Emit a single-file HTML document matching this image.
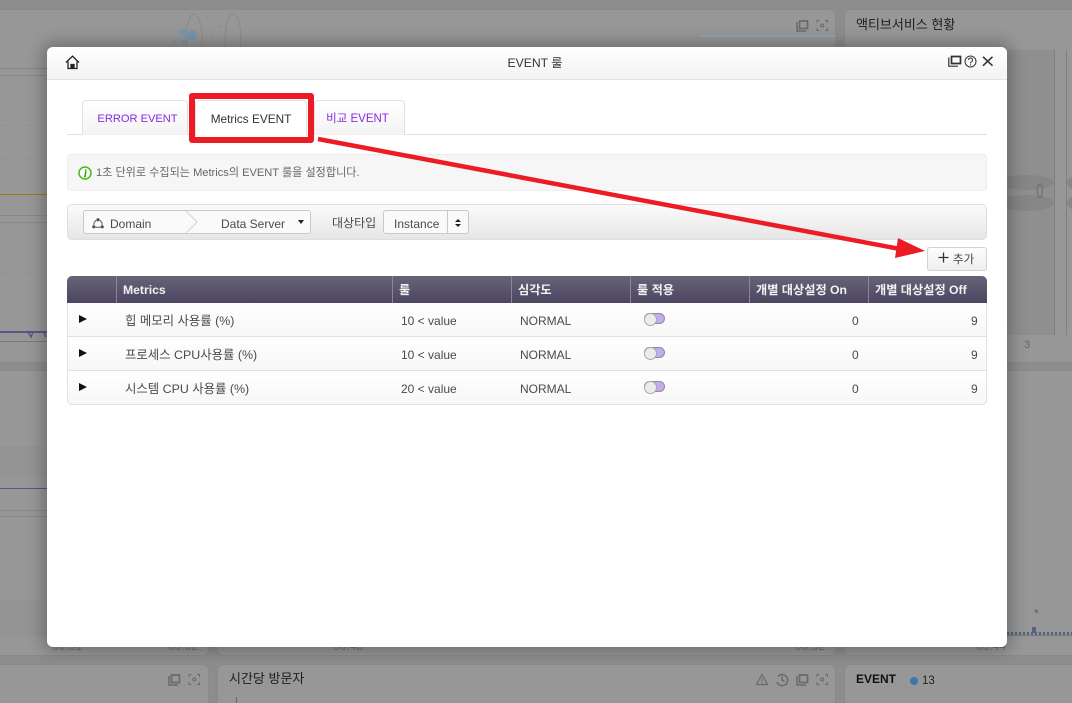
<!DOCTYPE html>
<html lang="ko">
<head>
<meta charset="utf-8">
<title>EVENT 룰</title>
<style>
*{box-sizing:border-box}
html,body{margin:0;padding:0;width:1072px;height:703px;overflow:hidden}
body{position:relative;background:#8d8d8d;font-family:"Liberation Sans","Noto Sans CJK KR",sans-serif;font-size:12px;color:#333}
#wrap{position:absolute;left:0;top:0;width:1072px;height:703px;overflow:hidden;background:#8d8d8d}
.a{position:absolute}
.t{position:absolute;white-space:nowrap;line-height:16px}
.panel{position:absolute;background:#979797;border:1px solid #8a8a8a;border-radius:6px}
.bgline{position:absolute;height:1px;background:#888}
.dot{position:absolute;height:1px;left:0;width:47px;background:repeating-linear-gradient(90deg,#8f8f8f 0 2px,transparent 2px 5px)}
.modal{position:absolute;left:47px;top:47px;width:960px;height:600px;background:#fff;border-radius:6px;box-shadow:0 0 16px 4px rgba(0,0,0,.28)}
.head{position:absolute;left:0;top:0;width:960px;height:33px;border-radius:6px 6px 0 0;background:linear-gradient(#fff,#f3f3f3);border-bottom:1px solid #e4e4e4}
.tab{position:absolute;top:53px;height:35px;border:1px solid #e2e2e2;border-bottom:none;border-radius:4px 4px 0 0;background:linear-gradient(#fff,#f3f3f3);color:#8a2be2;text-align:center;line-height:36px;font-size:11.1px}
.th{position:absolute;top:230px;height:27px;line-height:27px;color:#f2f2f2;font-weight:bold;font-size:12.2px;white-space:nowrap;padding-left:6px}
.row{position:absolute;left:20px;width:920px;height:34px;background:linear-gradient(#fff,#f7f7f7);border-bottom:1px solid #e2e2e2}
.cell{position:absolute;white-space:nowrap;line-height:16px;color:#4a4a4a;font-size:12px}
.name{font-size:12.4px}
.tog{position:absolute;left:597px;width:21px;height:11px;border-radius:6px;background:#c2abf0;border:1px solid #8f8a9c}
.tog:before{content:"";position:absolute;left:-1px;top:-1px;width:11px;height:11px;border-radius:50%;background:#ececec;border:1px solid #aaa}
.tri{position:absolute;left:32px;width:0;height:0;border-left:8px solid #111;border-top:4px solid transparent;border-bottom:4px solid transparent}
</style>
</head>
<body>
<div id="wrap">
<!-- dimmed dashboard background -->
<div class="panel" style="left:-8px;top:9px;width:844px;height:354px"></div>
<div class="panel" style="left:844px;top:9px;width:240px;height:354px"></div>
<div class="panel" style="left:-8px;top:370px;width:217px;height:286px"></div>
<div class="panel" style="left:217px;top:370px;width:619px;height:286px"></div>
<div class="panel" style="left:844px;top:370px;width:240px;height:286px"></div>
<div class="panel" style="left:-8px;top:664px;width:217px;height:39px;border-bottom:none;border-radius:6px 6px 0 0"></div>
<div class="panel" style="left:217px;top:664px;width:619px;height:39px;border-bottom:none;border-radius:6px 6px 0 0"></div>
<div class="panel" style="left:844px;top:664px;width:228px;height:39px;border-bottom:none;border-right:none;border-radius:6px 0 0 0"></div>

<div class="bgline" style="left:0;top:68px;width:47px;background:#848484"></div>
<div class="bgline" style="left:0;top:75px;width:47px"></div>
<div class="dot" style="top:125px"></div>
<div class="dot" style="top:159px"></div>
<div class="a" style="left:0;top:194px;width:47px;height:1px;background:#9c7a12"></div>
<div class="bgline" style="left:0;top:215px;width:47px"></div>
<div class="bgline" style="left:0;top:222px;width:47px"></div>
<div class="dot" style="top:272px"></div>
<div class="dot" style="top:318px"></div>
<div class="a" style="left:0;top:331px;width:47px;height:2px;background:#55558a"></div>
<div class="bgline" style="left:0;top:341px;width:47px;background:#7a7a7a"></div>
<div class="a" style="left:0;top:446px;width:47px;height:29px;background:#939393"></div>
<div class="dot" style="top:420px"></div>
<div class="a" style="left:0;top:488px;width:47px;height:1px;background:#55558a"></div>
<div class="bgline" style="left:0;top:510px;width:47px"></div>
<div class="bgline" style="left:0;top:516px;width:47px"></div>
<div class="dot" style="top:566px"></div>
<div class="a" style="left:0;top:600px;width:47px;height:36px;background:#939393"></div>
<svg class="a" style="left:0;top:325px" width="47" height="20"><path d="M28 7 L31 12 L33 7 M44 7 L46 12" fill="none" stroke="#55558a" stroke-width="1.5"/></svg>

<div class="a" style="left:700px;top:35px;width:136px;height:2px;background:#8fa3ad"></div>
<div class="a" style="left:1007px;top:50px;width:47px;height:285px;background:#8f8f8f"></div>
<div class="a" style="left:1054px;top:50px;width:1px;height:285px;background:#808080"></div>
<div class="a" style="left:1066px;top:50px;width:1px;height:285px;background:#808080"></div>
<div class="a" style="left:1000px;top:175px;width:54px;height:15px;border-radius:50%;background:#868686"></div>
<div class="a" style="left:1000px;top:195px;width:54px;height:16px;border-radius:50%;background:#868686"></div>
<div class="a" style="left:1067px;top:176px;width:20px;height:14px;border-radius:50%;background:#868686"></div>
<div class="a" style="left:1067px;top:196px;width:20px;height:14px;border-radius:50%;background:#868686"></div>
<div class="t" style="left:1034px;top:183px;font-size:21px;line-height:18px;color:#6f6f6f;transform:scaleX(.6)">0</div>
<div class="t" style="left:1024px;top:337px;font-size:11px;color:#666">3</div>
<div class="a" style="left:1007px;top:632px;width:65px;height:3px;background:repeating-linear-gradient(90deg,#5a5f8c 0 2px,#8a9a80 2px 4px)"></div>
<div class="a" style="left:1007px;top:635px;width:65px;height:1px;background:#7a7a7a"></div>
<div class="t" style="left:1034px;top:604px;font-size:8px;color:#44447a">×</div>
<div class="a" style="left:1032px;top:627px;width:4px;height:6px;background:#5a5f8c"></div>

<svg class="a" style="left:170px;top:8px" width="75" height="40">
 <ellipse cx="24" cy="30" rx="8" ry="24" fill="none" stroke="#8a8a8a"/>
 <ellipse cx="63" cy="30" rx="8" ry="24" fill="none" stroke="#8a8a8a"/>
 <g fill="#7397b0"><circle cx="22" cy="27" r="5"/><circle cx="13" cy="24" r="3.500"/><circle cx="13" cy="34" r="2.500"/><circle cx="5" cy="34" r="1.500"/><circle cx="25" cy="37" r="1"/><circle cx="51" cy="18" r="1.500"/><circle cx="42" cy="27" r="1"/><circle cx="42" cy="10" r=".6"/></g>
</svg>

<svg class="a" style="left:796px;top:19px" width="34" height="13" fill="none" stroke="#6a6a6a">
 <path d="M3.500 2H11.500V9.500H3.500Z" stroke-width="1.700"/><path d="M1 3V12H10" stroke-width="1.500"/>
 <path d="M21 4V1.500H23.500M29 1.500H31.500V4M31.500 9V11.500H29M23.500 11.500H21V9" stroke-width="1"/><circle cx="26.200" cy="6.500" r="1.500"/>
</svg>
<div class="t" style="left:856px;top:17px;font-size:13px;color:#1e1e1e">액티브서비스 현황</div>
<div class="t" style="left:52px;top:638px;font-size:12px;color:#6f6f6f">00:31</div>
<div class="t" style="left:168px;top:638px;font-size:12px;color:#6f6f6f">00:32</div>
<div class="t" style="left:333px;top:638px;font-size:12px;color:#6f6f6f">00:48</div>
<div class="t" style="left:795px;top:638px;font-size:12px;color:#6f6f6f">00:52</div>
<div class="t" style="left:976px;top:638px;font-size:12px;color:#6f6f6f">00:44</div>

<svg class="a" style="left:168px;top:673px" width="34" height="13" fill="none" stroke="#6a6a6a">
 <path d="M3.500 2H11.500V9.500H3.500Z" stroke-width="1.700"/><path d="M1 3V12H10" stroke-width="1.500"/>
 <path d="M21 4V1.500H23.500M29 1.500H31.500V4M31.500 9V11.500H29M23.500 11.500H21V9" stroke-width="1"/><circle cx="26.200" cy="6.500" r="1.500"/>
</svg>
<div class="t" style="left:229px;top:671px;font-size:13px;color:#1e1e1e">시간당 방문자</div>
<div class="a" style="left:236px;top:697px;width:1px;height:6px;background:#666"></div>
<svg class="a" style="left:755px;top:673px" width="75" height="14" fill="none" stroke="#6a6a6a">
 <path d="M7 1.500L12.500 11.500H1.500Z" stroke-width="1.200"/><path d="M7 5V8.500M7 9.500V10.500"/>
 <path d="M23 3.500A5.500 5.500 0 1 1 22 9M27 3.500V7L29.500 8.500" stroke-width="1.500"/>
 <path d="M44.500 2H52.500V9.500H44.500Z" stroke-width="1.700"/><path d="M42 3V12H51" stroke-width="1.500"/>
 <path d="M62 4V1.500H64.500M70 1.500H72.500V4M72.500 9V11.500H70M64.500 11.500H62V9" stroke-width="1"/><circle cx="67.200" cy="6.500" r="1.500"/>
</svg>
<div class="t" style="left:856px;top:671px;font-size:12px;font-weight:bold;color:#111">EVENT</div>
<div class="a" style="left:910px;top:677px;width:8px;height:8px;border-radius:50%;background:#3b78b0"></div>
<div class="t" style="left:922px;top:673px;font-size:11.500px;color:#222">13</div>

<!-- modal -->
<div class="modal">
 <div class="head"></div>
 <svg class="a" style="left:18px;top:8px" width="15" height="15" fill="none" stroke="#222" stroke-width="1.300">
  <path d="M1 7.500L7.500 1.200L14 7.500"/><path d="M3 6.500V13.500H12V6.500"/><path d="M6 13.500V9.500H9V13.500" fill="#222"/>
 </svg>
 <div class="t" style="left:8px;width:960px;text-align:center;top:8px;font-size:12.200px;color:#333">EVENT 룰</div>
 <svg class="a" style="left:901px;top:8px" width="46" height="14" fill="none" stroke="#333">
  <path d="M3.500 1.500H12.500V8.500H3.500Z" stroke-width="1.700"/><path d="M.8 2.500V11.200H10" stroke-width="1.200"/>
  <circle cx="22.500" cy="6.500" r="5.500" stroke-width="1"/><path d="M20.500 5A2 2 0 1 1 23 7C22.500 7.300 22.500 7.700 22.500 8.500M22.500 9.300V10.300" stroke-width="1"/>
  <path d="M35 1.800L44.500 10.700M44.500 1.800L35 10.700" stroke-width="1.600"/>
 </svg>

 <!-- tabs -->
 <div class="a" style="left:20px;top:87px;width:920px;height:1px;background:#e0e0e0"></div>
 <div class="tab" style="left:35px;width:106px;padding-left:5px">ERROR EVENT</div>
 <div class="tab" style="left:148px;width:112px;background:#fff;color:#333;height:36px;font-size:11.800px">Metrics EVENT</div>
 <div class="tab" style="left:267px;width:91px;padding-right:4px;font-size:11.500px">비교 EVENT</div>

 <!-- info -->
 <div class="a" style="left:20px;top:107px;width:920px;height:37px;background:#f6f6f6;border:1px solid #ececec;border-radius:4px"></div>
 <svg class="a" style="left:31px;top:119px" width="14" height="14">
  <circle cx="7" cy="7" r="6" fill="#fff" stroke="#3fbe0c" stroke-width="1.500"/>
  <path d="M7.700 3.200V4.700M7 6H7.800L6.800 10.700H7.800" fill="none" stroke="#2f9a08" stroke-width="1.400"/>
 </svg>
 <div class="t" style="left:49px;top:118px;font-size:11.100px;color:#666">1초 단위로 수집되는 Metrics의 EVENT 룰을 설정합니다.</div>

 <!-- toolbar -->
 <div class="a" style="left:20px;top:157px;width:920px;height:36px;border:1px solid #dedede;border-radius:5px;background:linear-gradient(#fbfbfb,#e6e6e6)"></div>
 <div class="a" style="left:36px;top:163px;width:228px;height:24px;background:#fafafa;border:1px solid #c9c9c9;border-radius:3px"></div>
 <svg class="a" style="left:138px;top:163px" width="14" height="24" fill="none" stroke="#d4d4d4"><path d="M.5 .5L12 12L.5 23.500"/></svg>
 <svg class="a" style="left:45px;top:171px" width="12" height="11" fill="none" stroke="#555">
  <path d="M4.200 2.500A4 4 0 0 0 2 7M7.800 2.500A4 4 0 0 1 10 7M3.500 9.200H8.500"/>
  <circle cx="6" cy="1.700" r="1.100" fill="#333"/><circle cx="1.800" cy="8.800" r="1.100" fill="#333"/><circle cx="10.200" cy="8.800" r="1.100" fill="#333"/>
 </svg>
 <div class="t" style="left:63px;top:169px;font-size:12px;color:#4a4a4a">Domain</div>
 <div class="t" style="left:174px;top:169px;font-size:12px;color:#4a4a4a">Data Server</div>
 <div class="a" style="left:251px;top:173px;border-top:4px solid #222;border-left:3.500px solid transparent;border-right:3.500px solid transparent"></div>
 <div class="t" style="left:285px;top:168px;font-size:12px;color:#4a4a4a">대상타입</div>
 <div class="a" style="left:336px;top:163px;width:86px;height:24px;background:#fafafa;border:1px solid #c9c9c9;border-radius:3px"></div>
 <div class="a" style="left:400px;top:163px;width:1px;height:24px;background:#c9c9c9"></div>
 <div class="t" style="left:347px;top:169px;font-size:12px;color:#4a4a4a">Instance</div>
 <div class="a" style="left:408px;top:172px;border-bottom:3.500px solid #222;border-left:3px solid transparent;border-right:3px solid transparent"></div>
 <div class="a" style="left:408px;top:177px;border-top:3.500px solid #222;border-left:3px solid transparent;border-right:3px solid transparent"></div>

 <!-- add -->
 <div class="a" style="left:880px;top:200px;width:60px;height:24px;border:1px solid #d2d2d2;border-radius:3px;background:linear-gradient(#fdfdfd,#eee)"></div>
 <svg class="a" style="left:891px;top:205px" width="11" height="11"><path d="M5.500 .5V10.500M.5 5.500H10.500" stroke="#333" stroke-width="1.300"/></svg>
 <div class="t" style="left:906px;top:205px;font-size:11.500px;color:#444">추가</div>

 <!-- table -->
 <div class="a" style="left:20px;top:229px;width:920px;height:27px;border-radius:5px 5px 0 0;background:linear-gradient(#696379,#4b4560)"></div>
 <div class="a" style="left:69px;top:229px;width:1px;height:27px;background:#8a859a"></div>
 <div class="a" style="left:345px;top:229px;width:1px;height:27px;background:#8a859a"></div>
 <div class="a" style="left:464px;top:229px;width:1px;height:27px;background:#8a859a"></div>
 <div class="a" style="left:583px;top:229px;width:1px;height:27px;background:#8a859a"></div>
 <div class="a" style="left:702px;top:229px;width:1px;height:27px;background:#8a859a"></div>
 <div class="a" style="left:821px;top:229px;width:1px;height:27px;background:#8a859a"></div>
 <div class="th" style="left:70px">Metrics</div>
 <div class="th" style="left:346px">룰</div>
 <div class="th" style="left:465px">심각도</div>
 <div class="th" style="left:584px">룰 적용</div>
 <div class="th" style="left:703px">개별 대상설정 On</div>
 <div class="th" style="left:822px">개별 대상설정 Off</div>

 <div class="row" style="top:256px"></div>
 <div class="row" style="top:290px"></div>
 <div class="row" style="top:324px;height:34px;border:1px solid #e2e2e2;border-top:none;border-radius:0 0 5px 5px"></div>
 <div class="a" style="left:20px;top:256px;width:1px;height:68px;background:#e2e2e2"></div>
 <div class="a" style="left:939px;top:256px;width:1px;height:68px;background:#e2e2e2"></div>

 <div class="tri" style="top:268px"></div>
 <div class="cell name" style="left:78px;top:266px">힙 메모리 사용률 (%)</div>
 <div class="cell" style="left:354px;top:266px">10 &lt; value</div>
 <div class="cell" style="left:473px;top:266px">NORMAL</div>
 <div class="tog" style="top:266px"></div>
 <div class="cell" style="left:805px;top:266px">0</div>
 <div class="cell" style="left:924px;top:266px">9</div>

 <div class="tri" style="top:302px"></div>
 <div class="cell name" style="left:78px;top:300px">프로세스 CPU사용률 (%)</div>
 <div class="cell" style="left:354px;top:300px">10 &lt; value</div>
 <div class="cell" style="left:473px;top:300px">NORMAL</div>
 <div class="tog" style="top:300px"></div>
 <div class="cell" style="left:805px;top:300px">0</div>
 <div class="cell" style="left:924px;top:300px">9</div>

 <div class="tri" style="top:336px"></div>
 <div class="cell name" style="left:78px;top:334px">시스템 CPU 사용률 (%)</div>
 <div class="cell" style="left:354px;top:334px">20 &lt; value</div>
 <div class="cell" style="left:473px;top:334px">NORMAL</div>
 <div class="tog" style="top:334px"></div>
 <div class="cell" style="left:805px;top:334px">0</div>
 <div class="cell" style="left:924px;top:334px">9</div>
</div>

<!-- annotations -->
<div class="a" style="left:189px;top:93px;width:125px;height:50px;border:6px solid #ed1c24;border-radius:3px"></div>
<svg class="a" style="left:0;top:0" width="1072" height="703">
 <path d="M318 139L900 249" stroke="#ed1c24" stroke-width="4.500" fill="none"/>
 <path d="M898 238L895 258L925 251Z" fill="#ed1c24"/>
</svg>
</div>
</body>
</html>
